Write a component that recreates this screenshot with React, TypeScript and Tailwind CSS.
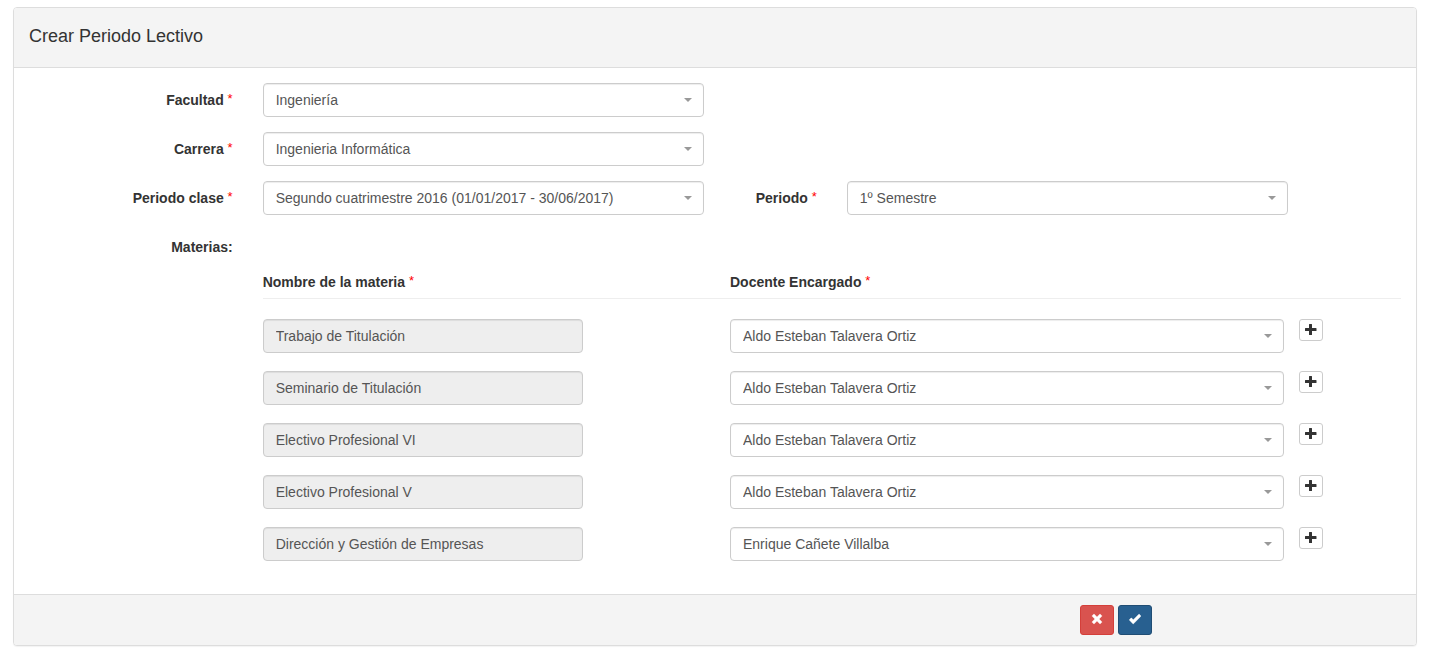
import React, { useId } from "react";

const subjects = [
  { name: "Trabajo de Titulación", teacher: "Aldo Esteban Talavera Ortiz" },
  { name: "Seminario de Titulación", teacher: "Aldo Esteban Talavera Ortiz" },
  { name: "Electivo Profesional VI", teacher: "Aldo Esteban Talavera Ortiz" },
  { name: "Electivo Profesional V", teacher: "Aldo Esteban Talavera Ortiz" },
  { name: "Dirección y Gestión de Empresas", teacher: "Enrique Cañete Villalba" },
];

const teachers = ["Aldo Esteban Talavera Ortiz", "Enrique Cañete Villalba"];

function Required() {
  return <span className="align-top text-[13px] leading-[18px] font-normal text-[#ff0000]">*</span>;
}

type DropdownProps = {
  id?: string;
  value: string;
  options?: string[];
  label?: string;
};

function Dropdown({ id, value, options = [value], label }: DropdownProps) {
  return (
    <div className="relative">
      <select
        id={id}
        aria-label={label}
        defaultValue={value}
        className="block h-[34px] w-full appearance-none rounded border border-[#cccccc] bg-white pr-8 pl-3 text-[#555555] shadow-[inset_0_1px_1px_rgba(0,0,0,0.075)]"
      >
        {options.map((o) => (
          <option key={o}>{o}</option>
        ))}
      </select>
      <svg
        viewBox="0 0 8 4"
        aria-hidden="true"
        className="pointer-events-none absolute top-[15px] right-3 h-1 w-2 fill-[#999999]"
      >
        <path d="M0 0h8L4 4z" />
      </svg>
    </div>
  );
}

function Field({ label, value }: { label: string; value: string }) {
  const id = useId();
  return (
    <div className="flex">
      <label htmlFor={id} className="w-1/6 px-[15px] pt-[7px] text-right font-bold">
        {label} <Required />
      </label>
      <div className="w-1/3 px-[15px]">
        <div className="-mr-1">
          <Dropdown id={id} value={value} />
        </div>
      </div>
    </div>
  );
}

export default function App() {
  const classId = useId();
  const periodId = useId();
  return (
    <main className="pt-[7px] pr-[29px] pb-2.5 pl-[13px] font-['Liberation_Sans',Arial,sans-serif] text-[14px] leading-5 text-[#333333]">
      <form
        onSubmit={(e) => e.preventDefault()}
        className="overflow-hidden rounded border border-[#dddddd] bg-white shadow-[0_1px_1px_rgba(0,0,0,0.05)]"
      >
        <header className="border-b border-[#dddddd] bg-[#f4f4f4] px-[15px] pt-[18px] pb-[21px]">
          <h1 className="text-[18px] leading-5">Crear Periodo Lectivo</h1>
        </header>

        <div className="flex flex-col gap-[15px] pt-[15px] pb-[33px]">
          <Field label="Facultad" value="Ingeniería" />
          <Field label="Carrera" value="Ingenieria Informática" />
          <div className="flex">
            <label htmlFor={classId} className="w-1/6 px-[15px] pt-[7px] text-right font-bold">
              Periodo clase <Required />
            </label>
            <div className="w-1/3 px-[15px]">
              <div className="-mr-1">
                <Dropdown id={classId} value="Segundo cuatrimestre 2016 (01/01/2017 - 30/06/2017)" />
              </div>
            </div>
            <label htmlFor={periodId} className="w-1/12 px-[15px] pt-[7px] text-right font-bold whitespace-nowrap">
              Periodo <Required />
            </label>
            <div className="w-1/3 px-[15px]">
              <div className="-mr-1">
                <Dropdown id={periodId} value="1º Semestre" />
              </div>
            </div>
          </div>

          <section>
            <h2 className="w-1/6 px-[15px] pt-[7px] text-right font-bold">Materias:</h2>
            <div className="ml-[16.6667%] pt-[15px]">
              <div className="relative flex pb-[7px] font-bold after:absolute after:inset-x-[15px] after:bottom-0 after:h-px after:bg-[#eeeeee]">
                <span className="w-2/5 pl-[15px]">
                  Nombre de la materia <Required />
                </span>
                <span className="w-1/2 pl-[15px]">
                  Docente Encargado <Required />
                </span>
              </div>
              <ul className="flex flex-col gap-[18px] pt-5">
                {subjects.map((s) => (
                  <li key={s.name} className="flex items-start">
                    <div className="mr-[10%] w-[30%] px-[15px]">
                      <input
                        readOnly
                        aria-label="Nombre de la materia"
                        value={s.name}
                        className="block h-[34px] w-full rounded border border-[#cccccc] bg-[#eeeeee] px-3 text-[#555555] shadow-[inset_0_1px_1px_rgba(0,0,0,0.075)]"
                      />
                    </div>
                    <div className="w-1/2 px-[15px]">
                      <Dropdown value={s.teacher} options={teachers} label={`Docente encargado de ${s.name}`} />
                    </div>
                    <button
                      type="button"
                      aria-label="Agregar docente"
                      className="flex h-[22px] w-6 items-start rounded-[3px] border border-[#cccccc] bg-white pt-1 pl-[5px]"
                    >
                      <svg viewBox="0 0 12 12" className="h-3 w-3 fill-[#333333]" aria-hidden="true">
                        <path d="M4.500 0h2q.5 0 .5.5V4h4q.5 0 .5.5v2q0 .5-.5.5H7v3.500q0 .5-.5.5h-2q-.5 0-.5-.5V7H.5Q0 7 0 6.500v-2Q0 4 .5 4H4V.5q0-.5.5-.5z" />
                      </svg>
                    </button>
                  </li>
                ))}
              </ul>
            </div>
          </section>
        </div>

        <footer className="border-t border-[#dddddd] bg-[#f4f4f4] py-2.5">
          <div className="ml-[75%] flex gap-1 px-3.5">
            <button
              type="button"
              aria-label="Cancelar"
              className="flex h-[30px] w-[34px] items-center justify-center rounded-[3px] border border-[#d43f3a] bg-[#d9534f] pb-0.5"
            >
              <svg viewBox="0 0 12 12" className="h-3 w-3 fill-white stroke-white stroke-[0.4]" aria-hidden="true">
                <path d="M3.300 1.200 6 3.900l2.700-2.700q.3-.3.6 0l1.500 1.500q.3.3 0 .6L8.100 6l2.700 2.700q.3.3 0 .6l-1.500 1.500q-.3.3-.6 0L6 8.100l-2.700 2.700q-.3.3-.6 0L1.200 9.300q-.3-.3 0-.6L3.900 6 1.200 3.300q-.3-.3 0-.6l1.500-1.500q.3-.3.6 0z" />
              </svg>
            </button>
            <button
              type="submit"
              aria-label="Guardar"
              className="flex h-[30px] w-[34px] items-center justify-center rounded-[3px] border border-[#204d74] bg-[#286090] pb-0.5"
            >
              <svg viewBox="0 0 12 12" className="h-3 w-3 fill-white stroke-white stroke-[0.4]" aria-hidden="true">
                <path d="m10.400 1.300 1.300 1.500q.3.300 0 .6l-7.200 7.400q-.3.300-.6 0L.5 7.200q-.3-.3 0-.6l1.500-1.500q.3-.3.6 0l1.700 1.700 5.500-5.500q.3-.3.6 0z" />
              </svg>
            </button>
          </div>
        </footer>
      </form>
    </main>
  );
}
